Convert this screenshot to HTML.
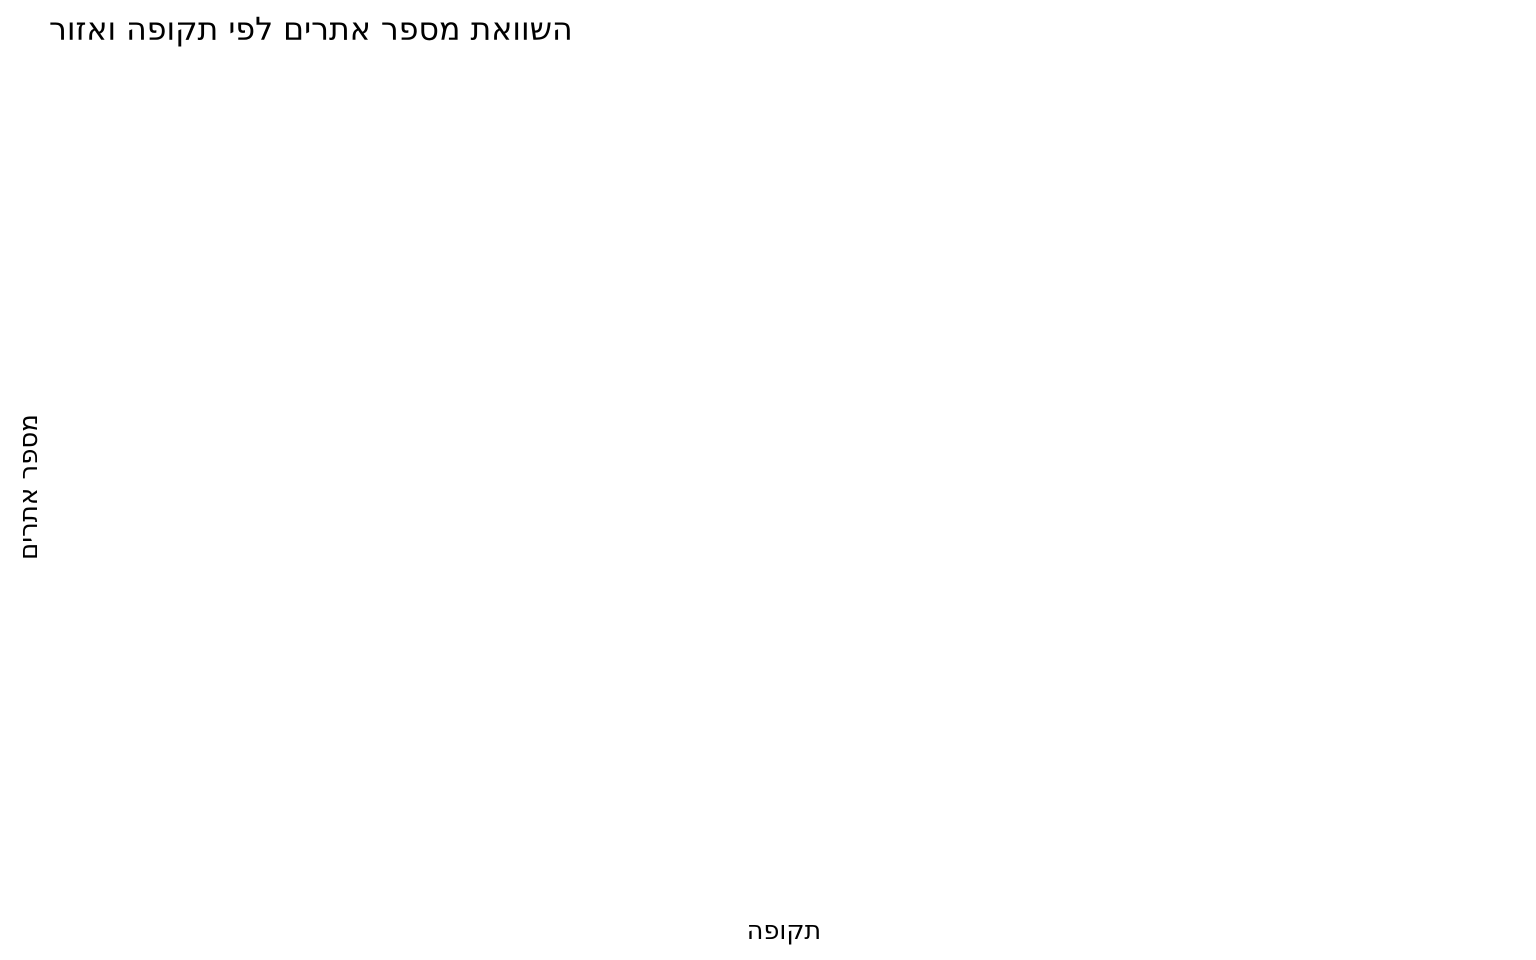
<!DOCTYPE html>
<html><head><meta charset="utf-8"><style>
html,body{margin:0;padding:0;background:#fff;width:1536px;height:960px;overflow:hidden;position:relative;font-family:"DejaVu Sans","Liberation Sans",sans-serif;color:#000}
.t{position:absolute;left:49px;top:10px;font-size:31.6px;line-height:40px;white-space:nowrap;direction:rtl}
.x{position:absolute;left:634px;width:300px;text-align:center;top:914px;font-size:25.5px;line-height:34px;direction:rtl}
.y{position:absolute;left:29px;top:487px;transform:translate(-50%,-50%) rotate(-90deg);font-size:26px;line-height:34px;white-space:nowrap;direction:rtl}
</style></head><body>
<div class="t">השוואת מספר אתרים לפי תקופה ואזור</div>
<div class="y">מספר אתרים</div>
<div class="x">תקופה</div>
</body></html>
